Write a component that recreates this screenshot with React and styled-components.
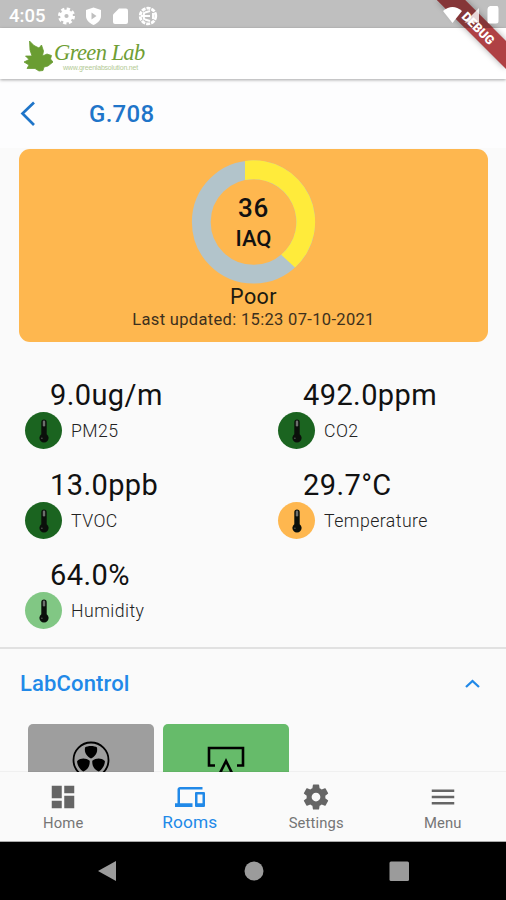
import React from 'react';
import styled, { createGlobalStyle } from 'styled-components';

const Global = createGlobalStyle`
  * { box-sizing: border-box; }
  body { margin: 0; background: #fafafa; }
`;

const Screen = styled.div`
  position: relative;
  width: 506px;
  height: 900px;
  overflow: hidden;
  display: flex;
  flex-direction: column;
  background: #fafafa;
  font-family: Roboto, sans-serif;
  color: #111;
`;

const StatusBar = styled.header`
  flex: none;
  height: 28px;
  display: flex;
  align-items: center;
  background: #bfbfbf;
  padding: 3px 0 0 9px;
  color: #fff;
`;
const Clock = styled.span`
  width: 48px;
  font-size: 18.5px;
  font-weight: 500;
  line-height: 20px;
`;
const StatusIcons = styled.svg`
  display: block;
`;

const AppBar = styled.div`
  flex: none;
  position: relative;
  height: 51px;
  display: flex;
  background: #fff;
  padding: 12px 0 0 23px;
  box-shadow: 0 1px 3px rgba(0, 0, 0, 0.35);
`;
const LogoWords = styled.div`
  display: flex;
  flex-direction: column;
  padding-left: 1px;
`;
const LogoName = styled.span`
  font: italic 22.5px/25px 'Liberation Serif', serif;
  color: #6f9e35;
  letter-spacing: -0.6px;
  white-space: nowrap;
`;
const LogoSite = styled.span`
  margin: -1px 0 0 9px;
  font: 7px/8px 'Liberation Sans', sans-serif;
  letter-spacing: -0.2px;
  color: #b4ca94;
`;

const TitleBar = styled.div`
  flex: none;
  height: 69px;
  display: flex;
  align-items: center;
  background: #fdfdfe;
  padding-left: 20px;
`;
const Title = styled.h1`
  margin: 0 0 0 53px;
  font-size: 24px;
  line-height: 28px;
  font-weight: 500;
  letter-spacing: 0.3px;
  color: #1f75c9;
`;

const Content = styled.main`
  flex: 1;
  min-height: 0;
  overflow: hidden;
`;

const QualityCard = styled.section`
  height: 193px;
  margin: 0.5px 18px 0 19px;
  padding-top: 10.5px;
  border-radius: 11px;
  background: #feb74f;
  display: flex;
  flex-direction: column;
  align-items: center;
`;
const Gauge = styled.div`
  display: grid;
  width: 126px;
  height: 126px;
  > * { grid-area: 1 / 1; }
`;
const GaugeLabel = styled.div`
  display: flex;
  flex-direction: column;
  align-items: center;
  padding-top: 34px;
  font-weight: 500;
`;
const Score = styled.span`
  font-size: 26px;
  line-height: 31px;
  letter-spacing: 0.7px;
`;
const Metric = styled.span`
  font-size: 22px;
  line-height: 29px;
`;
const Grade = styled.div`
  font-size: 21.5px;
  line-height: 24px;
  letter-spacing: 0.4px;
  color: #201a10;
`;
const Updated = styled.div`
  font-size: 16.5px;
  line-height: 22px;
  letter-spacing: 0.33px;
  white-space: nowrap;
  color: #3d301d;
`;

const Readings = styled.section`
  display: grid;
  grid-template-columns: 253px 253px;
  grid-auto-rows: 90px;
  padding-top: 36.5px;
  height: 307.5px;
  border-bottom: 2px solid #e1e1e1;
`;
const Reading = styled.div`
  padding-left: 25px;
`;
const Value = styled.div`
  padding-left: 25px;
  height: 34px;
  font-size: 29px;
  line-height: 34px;
  letter-spacing: 0.4px;
  white-space: nowrap;
`;
const Detail = styled.div`
  display: flex;
  align-items: center;
  gap: 9px;
`;
const Badge = styled.span`
  display: flex;
  align-items: center;
  justify-content: center;
  width: 37px;
  height: 37px;
  border-radius: 50%;
  background: ${p => p.$color};
`;
const Name = styled.span`
  font-size: 17.7px;
  font-weight: 300;
  line-height: 22px;
  letter-spacing: 0.45px;
  color: #222;
`;

const SectionHead = styled.div`
  display: flex;
  align-items: center;
  justify-content: space-between;
  height: 69px;
  padding: 0 25px 0 20px;
`;
const SectionTitle = styled.h2`
  margin: 0;
  font-size: 22px;
  font-weight: 500;
  letter-spacing: 0.15px;
  color: #2189e8;
`;
const Tiles = styled.div`
  display: flex;
  gap: 9px;
  padding: 5.5px 0 0 27.5px;
`;
const Tile = styled.div`
  width: 126px;
  height: 100px;
  border-radius: 5px;
  background: ${p => p.$color};
  display: flex;
  justify-content: center;
  padding-top: 15px;
`;

const TabBar = styled.nav`
  flex: none;
  height: 70px;
  display: grid;
  grid-template-columns: repeat(4, 1fr);
  background: #fafafa;
  box-shadow: 0 -1px 0 rgba(0, 0, 0, 0.04);
  border-bottom: 1px solid #aaa;
`;
const Tab = styled.div`
  display: flex;
  flex-direction: column;
  align-items: center;
  padding-top: 10px;
  color: ${p => (p.$active ? '#2189e8' : '#757575')};
`;
const TabIcon = styled.svg`
  width: 30px;
  height: 30px;
  fill: ${p => (p.$active ? '#2189e8' : '#656565')};
`;
const TabText = styled.span`
  font-size: ${p => (p.$active ? '17.3px' : '14.8px')};
  line-height: 20px;
  letter-spacing: ${p => (p.$active ? '0.1px' : '0.15px')};
  margin-top: ${p => (p.$active ? '0' : '1px')};
`;

const SystemNav = styled.footer`
  flex: none;
  height: 58px;
  background: #000;
  display: flex;
  justify-content: center;
  align-items: center;
  gap: 124px;
  padding-right: 1px;
`;

const DebugRibbon = styled.svg`
  position: absolute;
  top: 0;
  right: 0;
`;

const Thermometer = () => (
  <svg width="16" height="26" viewBox="0 0 16 26">
    <path d="M8 1.5a2.7 2.7 0 0 1 2.7 2.7v12a4.6 4.6 0 1 1-5.4 0v-12A2.7 2.7 0 0 1 8 1.5Z" fill="#0b100b" />
    <path d="M8 3.800v3.500" stroke="#fff" strokeOpacity=".4" strokeWidth="2.400" strokeLinecap="round" />
    <circle cx="5.9" cy="20.2" r=".7" fill="#fff" opacity=".35" />
  </svg>
);

const readings = [
  { value: '9.0ug/m', name: 'PM25', color: '#1b6420' },
  { value: '492.0ppm', name: 'CO2', color: '#1b6420' },
  { value: '13.0ppb', name: 'TVOC', color: '#1b6420' },
  { value: '29.7°C', name: 'Temperature', color: '#feb74f' },
  { value: '64.0%', name: 'Humidity', color: '#81c784' },
];

const tabs = [
  { label: 'Home', path: 'M3 13h8V3H3v10zm0 8h8v-6H3v6zm10 0h8V11h-8v10zm0-18v6h8V3h-8z' },
  { label: 'Rooms', active: true, path: 'M4 6h18V4H4c-1.1 0-2 .9-2 2v11H0v3h14v-3H4V6zm19 2h-6c-.55 0-1 .45-1 1v10c0 .55.45 1 1 1h6c.55 0 1-.45 1-1V9c0-.55-.45-1-1-1zm-1 9h-4v-7h4v7z' },
  { label: 'Settings', path: 'M19.43 12.98c.04-.32.07-.64.07-.98s-.03-.66-.07-.98l2.11-1.65c.19-.15.24-.42.12-.64l-2-3.46c-.12-.22-.39-.3-.61-.22l-2.49 1c-.52-.4-1.08-.73-1.69-.98l-.38-2.65C14.46 2.18 14.25 2 14 2h-4c-.25 0-.46.18-.49.42l-.38 2.65c-.61.25-1.17.59-1.69.98l-2.49-1c-.23-.09-.49 0-.61.22l-2 3.46c-.13.22-.07.49.12.64l2.11 1.65c-.04.32-.07.65-.07.98s.03.66.07.98l-2.11 1.65c-.19.15-.24.42-.12.64l2 3.46c.12.22.39.3.61.22l2.49-1c.52.4 1.08.73 1.69.98l.38 2.65c.03.24.24.42.49.42h4c.25 0 .46-.18.49-.42l.38-2.65c.61-.25 1.17-.59 1.69-.98l2.49 1c.23.09.49 0 .61-.22l2-3.46c.12-.22.07-.49-.12-.64l-2.11-1.65zM12 15.5c-1.93 0-3.5-1.57-3.5-3.5s1.57-3.5 3.5-3.5 3.5 1.57 3.5 3.5-1.57 3.5-3.5 3.5z' },
  { label: 'Menu', path: 'M3 18h18v-2H3v2zm0-5h18v-2H3v2zm0-7v2h18V6H3z' },
];

const Blade = ({ angle }) => (
  <path d="M0-1.500C-4-3.500-7-7-6-12.500-3.500-14.500 3.500-14.500 6-12.500 7-7 4-3.500 0-1.500Z" transform={`rotate(${angle})`} />
);

export default function App() {
  return (
    <Screen>
      <Global />
      <StatusBar>
        <Clock>4:05</Clock>
        <StatusIcons width="102" height="20" viewBox="0 0 102 20" fill="#fff">
          <circle cx="9.500" cy="10" r="6.400" />
          <circle cx="9.500" cy="10" r="7" fill="none" stroke="#fff" strokeWidth="3" strokeDasharray="3.2 2.3" />
          <circle cx="9.500" cy="10" r="2.100" fill="#bfbfbf" />
          <path d="M36.500 1.500 44 4v6c0 4-3 7-7.500 9-4.500-2-7.500-5-7.500-9V4Z" />
          <path d="m34.500 6.500 5 3.500-5 3.500Z" fill="#bfbfbf" />
          <path d="m62 2.500-6 6V16q0 2 2 2h11q2 0 2-2V4.500q0-2-2-2Z" />
          <circle cx="91" cy="10" r="7.800" fill="none" stroke="#fff" strokeWidth="2.800" strokeDasharray="4 1" />
          <path d="M84 10h9M88 6.500l5-1.500M88 13.500l5 1.500M87.500 6q-2 4 0 8M96 7v6" stroke="#fff" strokeWidth="1.900" fill="none" />
        </StatusIcons>
      </StatusBar>
      <AppBar>
        <svg width="30" height="33" viewBox="0 0 30 33">
          <path d="M6.500 1 11 5.500 16 8 18.500 5 20.500 11 19.500 16 24 14 28.500 15.500 27.500 19 30 22 25 26 21 27 20 30.500 16 31 12 28.500 4 28.500 6 25 1 22 6 19.500 2.500 16 9 16 7 10Z" fill="#6a9d32" stroke="#6a9d32" strokeWidth=".8" strokeLinejoin="round" />
        </svg>
        <LogoWords>
          <LogoName>Green Lab</LogoName>
          <LogoSite>www.greenlabsolution.net</LogoSite>
        </LogoWords>
      </AppBar>
      <TitleBar>
        <svg width="16" height="26" viewBox="0 0 16 26" fill="none" stroke="#1f75c9" strokeWidth="2.700">
          <path d="M14 1.500 2.500 12.500 14 24" />
        </svg>
        <Title>G.708</Title>
      </TitleBar>
      <Content>
        <QualityCard>
          <Gauge>
            <svg width="126" height="126" viewBox="0.500 0 126 126">
              <circle cx="63" cy="63" r="52.200" fill="none" stroke="#b2c4cb" strokeWidth="18.800" />
              <path d="M54.500 1.950A61.600 61.600 0 0 1 104.500 108.500L90.700 95.700A42.800 42.800 0 0 0 54.500 21.060Z" fill="#ffeb3b" />
            </svg>
            <GaugeLabel>
              <Score>36</Score>
              <Metric>IAQ</Metric>
            </GaugeLabel>
          </Gauge>
          <Grade>Poor</Grade>
          <Updated>Last updated: 15:23 07-10-2021</Updated>
        </QualityCard>
        <Readings>
          {readings.map(r => (
            <Reading key={r.name}>
              <Value>{r.value}</Value>
              <Detail>
                <Badge $color={r.color}><Thermometer /></Badge>
                <Name>{r.name}</Name>
              </Detail>
            </Reading>
          ))}
        </Readings>
        <SectionHead>
          <SectionTitle>LabControl</SectionTitle>
          <svg width="17" height="12" viewBox="0 0 17 12" fill="none" stroke="#2189e8" strokeWidth="2.300">
            <path d="m2 9 6.500-6 6.500 6" />
          </svg>
        </SectionHead>
        <Tiles>
          <Tile $color="#9e9e9e">
            <svg width="40" height="40" viewBox="-20 -21 40 40">
              <circle r="17.500" fill="none" stroke="#000" strokeWidth="1.800" />
              <Blade angle={0} />
              <Blade angle={120} />
              <Blade angle={240} />
            </svg>
          </Tile>
          <Tile $color="#66bb6a">
            <svg width="40" height="40" viewBox="0 0 40 40" fill="none" stroke="#000" strokeWidth="2.600">
              <path d="M9 26.500H3V9h34v17.500h-6" />
              <path d="m20 22-6 12h12Z" />
            </svg>
          </Tile>
        </Tiles>
      </Content>
      <TabBar>
        {tabs.map(t => (
          <Tab key={t.label} $active={t.active}>
            <TabIcon $active={t.active} viewBox="0 0 24 24"><path d={t.path} /></TabIcon>
            <TabText $active={t.active}>{t.label}</TabText>
          </Tab>
        ))}
      </TabBar>
      <SystemNav>
        <svg width="22" height="22" viewBox="0 0 22 22"><path d="M2 11 20 1v20Z" fill="#9b9b9b" /></svg>
        <svg width="22" height="22" viewBox="0 0 22 22"><circle cx="12" cy="11" r="9.500" fill="#9b9b9b" /></svg>
        <svg width="22" height="22" viewBox="0 0 22 22"><rect x="1.500" y="1.500" width="19.500" height="19.500" rx="1.500" fill="#9b9b9b" /></svg>
      </SystemNav>
      <DebugRibbon width="80" height="84" viewBox="426 0 80 84">
        <defs>
          <filter id="soft" x="-20%" y="-20%" width="140%" height="140%"><feGaussianBlur stdDeviation="3" /></filter>
        </defs>
        <path d="M437 0h28l41 41v28Z" fill="#000" opacity=".35" filter="url(#soft)" />
        <path d="M437 0h28l41 41v28Z" fill="#af4144" />
        <path d="M437 0h28l28 28h-28Z" fill="#853638" />
        <text transform="translate(478.500 28) rotate(45)" y="4.800" textAnchor="middle" fontFamily="Roboto" fontWeight="900" fontSize="12.500" fill="#fff">DEBUG</text>
        <path d="M443 11q9.500-8 19 0l-9.500 12Z" fill="#fff" />
        <path d="M479 8v14.500h-14.500Z" fill="#fff" opacity=".8" />
        <path d="M490 6h3.500h4q1 1 1 3v12q0 2.500-2.500 2.500h-6q-2.500 0-2.500-2.500V9q0-2 2.500-3Z" fill="#fff" />
      </DebugRibbon>
    </Screen>
  );
}
